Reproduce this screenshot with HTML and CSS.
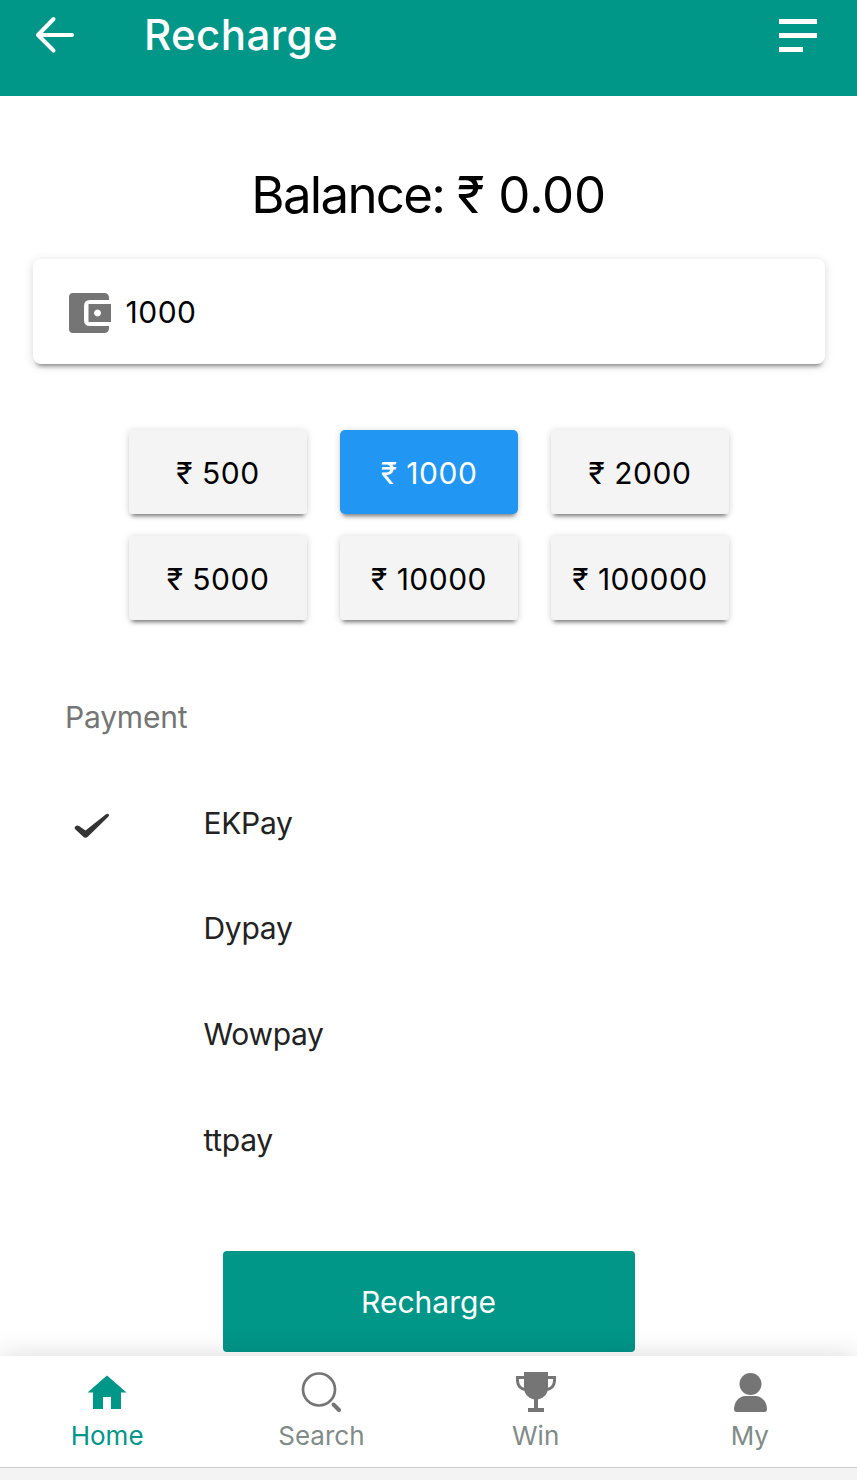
FILE: index.html
```html
<!DOCTYPE html>
<html lang="en">
<head>
    <meta charset="UTF-8">
    <meta name="viewport" content="width=device-width, initial-scale=1.0">
    <title>Recharge</title>
    <link rel="stylesheet" href="styles.css">
</head>
<body>
    <header class="top-bar">
        <svg class="back-icon" width="40" height="38" viewBox="0 0 40 38" fill="none" stroke="#fff" stroke-width="4" stroke-linecap="round" stroke-linejoin="round">
            <path d="M37 19H3M18.500 3L3 19L18.500 34.500"/>
        </svg>
        <h1>Recharge</h1>
        <svg class="menu-icon" width="38" height="34" viewBox="0 0 38 34" fill="#fff">
            <path d="M0 0h38v5H0zM0 14h38v5H0zM0 28h24v5H0z"/>
        </svg>
    </header>

    <main>
        <p class="balance">Balance: <span>₹ 0.00</span></p>

        <div class="amount-box">
            <svg class="wallet" width="44" height="42" viewBox="0 0 44 42">
                <path fill="#757575" d="M5 1H36Q41 1 41 6V8H22Q16 8 16 14V28Q16 34 22 34H41V36Q41 41 36 41H5Q1 41 1 37V5Q1 1 5 1z"/>
                <path fill="#757575" fill-rule="evenodd" d="M20.500 12H43V30H20.500zM29.500 17.500a3.500 3.500 0 1 0 .01 0z"/>
            </svg>
            <input type="text" value="1000">
        </div>

        <div class="amounts">
            <button>₹ 500</button>
            <button class="selected">₹ 1000</button>
            <button>₹ 2000</button>
            <button>₹ 5000</button>
            <button>₹ 10000</button>
            <button>₹ 100000</button>
        </div>

        <h2>Payment</h2>
        <ul class="payments">
            <li>
                <svg class="check" width="36" height="26" viewBox="0 0 36 26">
                    <path fill="#333" d="M.800 14Q2.500 11.500 5 13L11.500 17.500L32 1.300Q34.500 0 35 2Q35 3 34 4L14 23.500Q11.500 26 9 23.500L1.500 16.500Q.300 15.500 .800 14z"/>
                </svg>
                <span>EKPay</span>
            </li>
            <li><span>Dypay</span></li>
            <li><span>Wowpay</span></li>
            <li><span>ttpay</span></li>
        </ul>

        <button class="recharge-btn">Recharge</button>
    </main>

    <nav class="tab-bar">
        <a class="tab active">
            <svg width="44" height="44" viewBox="0 0 44 44">
                <path fill="#009688" d="M22 5.500L41.500 22.500H36V39H26V27H18V39H8V22.500H2.500z"/>
            </svg>
            <span>Home</span>
        </a>
        <a class="tab">
            <svg width="44" height="44" viewBox="0 0 44 44" fill="none" stroke="#757575">
                <circle cx="20" cy="19.500" r="16" stroke-width="2.700"/>
                <path d="M34.500 34.500L40 40" stroke-width="4" stroke-linecap="round"/>
            </svg>
            <span>Search</span>
        </a>
        <a class="tab">
            <svg width="44" height="44" viewBox="0 0 44 44">
                <path fill="#757575" d="M10 2H34V17Q34 27 24 29.500V38H30V42H14V38H20V29.500Q10 27 10 17z"/>
                <path fill="none" stroke="#757575" stroke-width="3" d="M10 7.500H3.500V11Q4 18 11 19.500M34 7.500H40.500V11Q40 18 33 19.500"/>
            </svg>
            <span>Win</span>
        </a>
        <a class="tab">
            <svg width="44" height="44" viewBox="0 0 44 44" fill="#757575">
                <circle cx="22.500" cy="14" r="11"/>
                <path d="M17.500 26H27.500C34.500 26 39 33 39 39Q39 42 36.500 42H8.500Q6 42 6 39C6 33 10.500 26 17.500 26z"/>
            </svg>
            <span>My</span>
        </a>
    </nav>
    <div class="bottom-edge"></div>
</body>
</html>
```
FILE: styles.css
```css
* {
    box-sizing: border-box;
}

body {
    margin: 0;
    height: 1480px;
    display: flex;
    flex-direction: column;
    font-family: Inter, "Liberation Sans", sans-serif;
    font-size: 30px;
    background-color: #fff;
    color: #000;
    overflow: hidden;
}

button,
input {
    font: inherit;
    letter-spacing: inherit;
    border: none;
    padding: 0;
}

.top-bar {
    height: 96px;
    flex-shrink: 0;
    display: flex;
    align-items: flex-start;
    padding: 0 40px 0 35px;
    background-color: #009688;
    color: #fff;
}

.top-bar h1 {
    flex: 1;
    margin: 0 0 0 69px;
    font-size: 42px;
    font-weight: 500;
    line-height: 70px;
    letter-spacing: 0.4px;
}

.back-icon {
    margin-top: 16px;
}

.menu-icon {
    margin-top: 19px;
}

main {
    height: 1260px;
    flex-shrink: 0;
    display: flex;
    flex-direction: column;
    align-items: center;
}

.balance {
    margin: 67px 0 0;
    font-size: 51px;
    line-height: 64px;
    letter-spacing: -1.7px;
}

.balance span {
    letter-spacing: -0.3px;
}

.amount-box {
    width: 792px;
    height: 105px;
    margin-top: 32px;
    padding-left: 35px;
    display: flex;
    align-items: center;
    letter-spacing: 0.5px;
    border-radius: 8px;
    box-shadow: 0 6px 4px -4px rgba(0, 0, 0, 0.4), 0 2px 10px rgba(0, 0, 0, 0.16);
}

.wallet {
    margin-top: 2px;
}

.amount-box input {
    width: 600px;
    margin-left: 14px;
    background: none;
    outline: none;
}

.amounts {
    margin-top: 66px;
    display: grid;
    grid-template-columns: repeat(3, 178px);
    gap: 22px 33px;
    letter-spacing: 0.5px;
}

.amounts button {
    height: 84px;
    padding: 1px 0 0 1px;
    background-color: #f4f4f4;
    color: #000;
    border-radius: 3px;
    box-shadow: 0 5px 4px -3px rgba(0, 0, 0, 0.45), 0 1px 7px rgba(0, 0, 0, 0.18);
}

.amounts .selected {
    background-color: #2196f3;
    color: #fff;
    border-radius: 5px;
}

h2 {
    width: 727px;
    margin: 77px 0 0;
    font-size: 30px;
    font-weight: 400;
    line-height: 40px;
    letter-spacing: -0.2px;
    color: #757575;
}

.payments {
    width: 727px;
    margin: 33px 0 0;
    padding: 0;
    list-style: none;
    letter-spacing: -0.3px;
    color: #222;
}

.payments li {
    height: 105.600px;
    display: grid;
    grid-template-columns: 138.500px 1fr;
    align-items: center;
}

.payments span {
    grid-column: 2;
}

.check {
    margin: 7px 0 0 9px;
}

.recharge-btn {
    width: 412px;
    height: 101px;
    margin-top: 59px;
    padding-top: 1px;
    background-color: #009688;
    color: #fff;
    border-radius: 4px;
}

.tab-bar {
    height: 112px;
    flex-shrink: 0;
    display: flex;
    background-color: #fff;
    border-bottom: 1px solid #ccc;
    box-shadow: 0 0 26px rgba(0, 0, 0, 0.15);
}

.tab {
    flex: 1;
    display: flex;
    flex-direction: column;
    align-items: center;
    padding-top: 14px;
    font-size: 26px;
    line-height: 44px;
    color: #7f8b89;
}

.active {
    color: #009688;
}

.bottom-edge {
    flex: 1;
    background-color: #f3f3f3;
}
```
